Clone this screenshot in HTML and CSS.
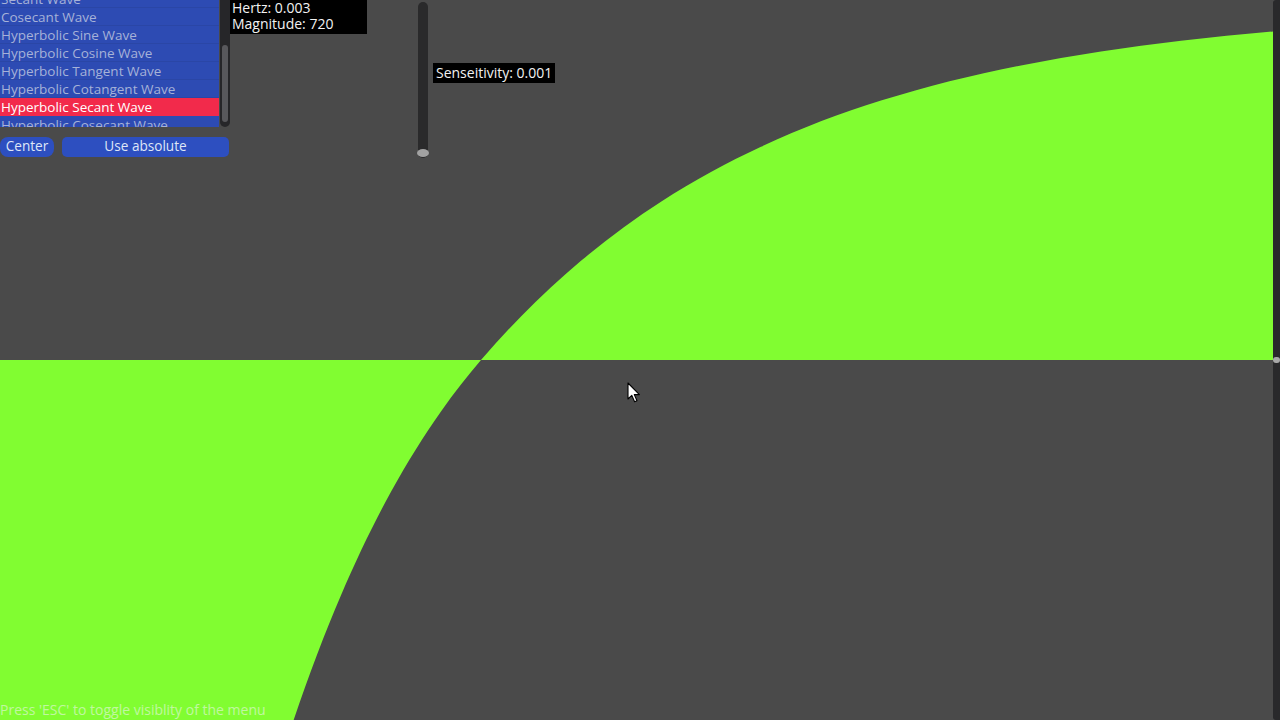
FILE: index.html
```html
<!DOCTYPE html>
<html>
<head>
<meta charset="utf-8">
<link rel="stylesheet" href="styles.css">
</head>
<body>
<div class="stage">
  <svg class="plot" width="1280" height="720" viewBox="0 0 1280 720">
    <path class="fill" d="M291 727.9 C307.7 677.9 324.3 634.1 341 595.2 C357.7 556.3 374.3 522.1 391 491.8 C407.7 461.5 424.3 435 441 411.4 C454.3 392.5 467.7 375.5 481 360 L0 360 L0 728 Z"/>
    <path class="fill" d="M481 360 C494.3 344.5 507.7 330 521 316.4 C541 296 561 277.6 581 260.8 C607.7 238.4 634.3 219 661 201.8 C694.3 180.3 727.7 162.3 761 146.8 C801 128.2 841 113.1 881 100.6 C927.7 86 974.3 74.6 1021 65.4 C1074.3 54.8 1127.7 47.1 1181 40.8 C1211.7 37.2 1242.3 34.1 1273 31.4 L1273 360 Z"/>
  </svg>

  <div class="menu">
    <div class="listcol">
      <div class="listrow">
        <div class="listbox">
          <ul class="items">
            <li class="item">Secant Wave</li>
            <li class="item">Cosecant Wave</li>
            <li class="item">Hyperbolic Sine Wave</li>
            <li class="item">Hyperbolic Cosine Wave</li>
            <li class="item">Hyperbolic Tangent Wave</li>
            <li class="item">Hyperbolic Cotangent Wave</li>
            <li class="item selected">Hyperbolic Secant Wave</li>
            <li class="item">Hyperbolic Cosecant Wave</li>
          </ul>
        </div>
        <div class="scroll"><div class="thumb"></div></div>
      </div>
      <div class="buttons">
        <div class="btn center">Center</div>
        <div class="btn absolute">Use absolute</div>
      </div>
    </div>
    <div class="info">
      <div class="info-line">Hertz: 0.003</div>
      <div class="info-line">Magnitude: 720</div>
    </div>
    <div class="vslider"><div class="knob"></div></div>
    <div class="sens">Senseitivity: 0.001</div>
  </div>

  <div class="rslider"><div class="rknob"></div></div>

  <div class="hint">Press 'ESC' to toggle visiblity of the menu</div>

  <svg class="cursor" width="14" height="22" viewBox="0 0 14 22">
    <path d="M1 1 L1 17 L4.8 13.4 L7.6 19.8 L10 18.8 L7.3 12.6 L12.4 12.6 Z" fill="#ffffff" stroke="#000000" stroke-width="1.1" stroke-linejoin="round"/>
  </svg>
</div>
</body>
</html>
```

FILE: styles.css
```css
html, body {
  margin: 0;
  padding: 0;
  background: #4a4a4a;
  overflow: hidden;
}

.stage {
  position: relative;
  width: 1280px;
  height: 720px;
  overflow: hidden;
  font-family: "Open Sans", "Noto Sans", "DejaVu Sans", sans-serif;
  font-size: 14px;
}

.plot {
  position: absolute;
  left: 0;
  top: 0;
  display: block;
}

.fill {
  fill: #81fd31;
}

.menu {
  position: absolute;
  left: 0;
  top: 0;
  display: flex;
  align-items: flex-start;
}

.listcol {
  width: 230px;
  display: flex;
  flex-direction: column;
}

.listrow {
  display: flex;
  height: 127px;
}

.listbox {
  width: 219px;
  height: 127px;
  overflow: hidden;
  background: #2d4bb3;
}

.items {
  list-style: none;
  margin: -10px 0 0 0;
  padding: 0;
}

.item {
  height: 18px;
  line-height: 18px;
  padding-left: 1px;
  font-size: 13.5px;
  color: #a6b2d8;
  box-sizing: border-box;
  white-space: nowrap;
  box-shadow: inset 0 -1px 0 #2a46a6;
}

.item.selected {
  background: #f22a4b;
  color: #ffffff;
  box-shadow: none;
}

.scroll {
  width: 10px;
  height: 127px;
  margin-left: 1px;
  background: #262629;
  border-radius: 0 0 5px 5px;
  display: flex;
  flex-direction: column;
  padding: 45px 2px 5px 2px;
  box-sizing: border-box;
}

.thumb {
  flex: 1;
  background: #58585c;
  border-radius: 3px;
}

.buttons {
  display: flex;
  gap: 8px;
  margin-top: 10px;
}

.btn {
  height: 20px;
  line-height: 18px;
  font-size: 13.6px;
  background: #2d4fc0;
  color: #dfe6f7;
  text-align: center;
  box-sizing: border-box;
}

.btn.center {
  width: 54px;
  border-radius: 8px;
}

.btn.absolute {
  width: 167px;
  border-radius: 5px;
}

.info {
  width: 137px;
  height: 34px;
  background: #000000;
  color: #f2f2f2;
  padding: 0 2px;
  box-sizing: border-box;
  white-space: nowrap;
}

.info-line {
  height: 16px;
  line-height: 16px;
}

.vslider {
  width: 10px;
  height: 156px;
  margin-left: 51px;
  margin-top: 2px;
  background: #2a2a2b;
  border-radius: 5px;
  display: flex;
  flex-direction: column;
  justify-content: flex-end;
  align-items: center;
}

.knob {
  width: 12px;
  height: 8px;
  border-radius: 50%;
  background: #a2a2a2;
  margin-bottom: 1px;
  flex-shrink: 0;
}

.sens {
  margin-left: 5px;
  margin-top: 63px;
  height: 20px;
  line-height: 20px;
  padding: 0 3px;
  background: #000000;
  color: #f2f2f2;
  white-space: nowrap;
}

.rslider {
  position: absolute;
  right: 0;
  top: 0;
  width: 7px;
  height: 720px;
  background: #29292b;
  border-radius: 3px 0 0 3px;
}

.rknob {
  position: absolute;
  left: 0;
  top: 357px;
  width: 7px;
  height: 6px;
  border-radius: 3px;
  background: #a8a8a8;
}

.hint {
  position: absolute;
  left: 0;
  bottom: 0;
  height: 20px;
  line-height: 19px;
  color: rgba(236, 244, 236, 0.6);
  white-space: nowrap;
}

.cursor {
  position: absolute;
  left: 627px;
  top: 382px;
}
```
